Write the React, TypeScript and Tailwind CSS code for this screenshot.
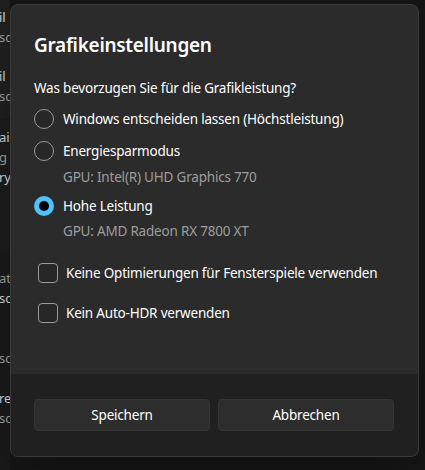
import React from "react";

const font = { fontFamily: '"Noto Sans", "Open Sans", sans-serif' };

function Radio({ checked }: { checked?: boolean }) {
  if (checked) {
    return (
      <span className="flex h-5 w-5 shrink-0 items-center justify-center rounded-full bg-[#4cc2ff]">
        <span className="h-[10px] w-[10px] rounded-full bg-black" />
      </span>
    );
  }
  return <span className="h-5 w-5 shrink-0 rounded-full border border-[#9a9a9a] bg-[#272727]" />;
}

function Check() {
  return <span className="h-5 w-5 shrink-0 rounded-[4px] border border-[#9a9a9a] bg-[#272727]" />;
}

const bgRows = [
  { t: "il", y: "mt-[7px]" },
  { t: "sc", y: "mt-[0px]" },
  { t: "il", y: "mt-[19px]" },
  { t: "sc", y: "mt-[0px]" },
  { t: "ail", y: "mt-[21px]" },
  { t: "g", y: "mt-[0px]" },
  { t: "ry", y: "mt-[0px]" },
  { t: "at", y: "mt-[81px]" },
  { t: "sc", y: "mt-[0px]" },
  { t: "sc", y: "mt-[40px]" },
  { t: "re", y: "mt-[20px]" },
  { t: "sc", y: "mt-[0px]" },
];

const row = "text-[13.5px] tracking-[-0.2px]";

export default function App() {
  return (
    <div className="relative h-[470px] w-[425px] overflow-hidden bg-[#151515]" style={font}>
      {/* page behind the dialog */}
      <div className="flex h-full w-[10px] flex-col">
        <div className="h-[118px] bg-[#1f1f1f]" />
        <div className="h-[134px] bg-[#1b1b1b]" />
        <div className="flex-1 bg-[#191919]" />
      </div>
      <div className="absolute left-0 top-0 flex w-[12px] flex-col overflow-hidden text-[13px] leading-[20px] text-[#9a9a9a]">
        {bgRows.map((r, i) => (
          <div key={i} className={`${r.y} -ml-[1px] whitespace-nowrap ${i % 2 === 0 ? "text-[#cfcfcf]" : ""}`}>
            {r.t}
          </div>
        ))}
      </div>

      {/* dialog */}
      <div className="absolute left-[10px] top-[4px] flex h-[453px] w-[409px] flex-col overflow-hidden rounded-lg border border-[#3a3a3a] bg-[#2b2b2b] shadow-2xl">
        <div className="flex-1 pl-[23px] pt-[26px] text-white">
          <h1 className="text-[19px] font-semibold leading-[28px] tracking-[-0.3px]">Grafikeinstellungen</h1>
          <p className={`mt-[19px] leading-[20px] ${row}`}>Was bevorzugen Sie für die Grafikleistung?</p>

          <div className="mt-[5px] flex h-[32px] items-center gap-[9px]">
            <Radio />
            <span className={row}>Windows entscheiden lassen (Höchstleistung)</span>
          </div>
          <div className="flex h-[32px] items-center gap-[9px]">
            <Radio />
            <span className={row}>Energiesparmodus</span>
          </div>
          <div className={`pl-[29px] leading-[20px] text-[#9d9d9d] ${row}`}>GPU: Intel(R) UHD Graphics 770</div>

          <div className="mt-[3px] flex h-[32px] items-center gap-[9px]">
            <Radio checked />
            <span className={row}>Hohe Leistung</span>
          </div>
          <div className={`-mt-[1px] pl-[29px] leading-[20px] text-[#9d9d9d] ${row}`}>GPU: AMD Radeon RX 7800 XT</div>

          <div className="mt-[16px] flex h-[32px] items-center gap-[8px] pl-[4px]">
            <Check />
            <span className={row}>Keine Optimierungen für Fensterspiele verwenden</span>
          </div>
          <div className="mt-[8px] flex h-[32px] items-center gap-[8px] pl-[4px]">
            <Check />
            <span className={row}>Kein Auto-HDR verwenden</span>
          </div>
        </div>

        <div className="flex h-[82px] gap-[8px] bg-[#202020] px-[23px] pt-[25px]">
          <button className={`h-[32px] w-[176px] rounded-[4px] border border-[#353535] bg-[#2d2d2d] text-white ${row}`}>
            Speichern
          </button>
          <button className={`h-[32px] w-[176px] rounded-[4px] border border-[#353535] bg-[#2d2d2d] text-white ${row}`}>
            Abbrechen
          </button>
        </div>
      </div>
    </div>
  );
}
